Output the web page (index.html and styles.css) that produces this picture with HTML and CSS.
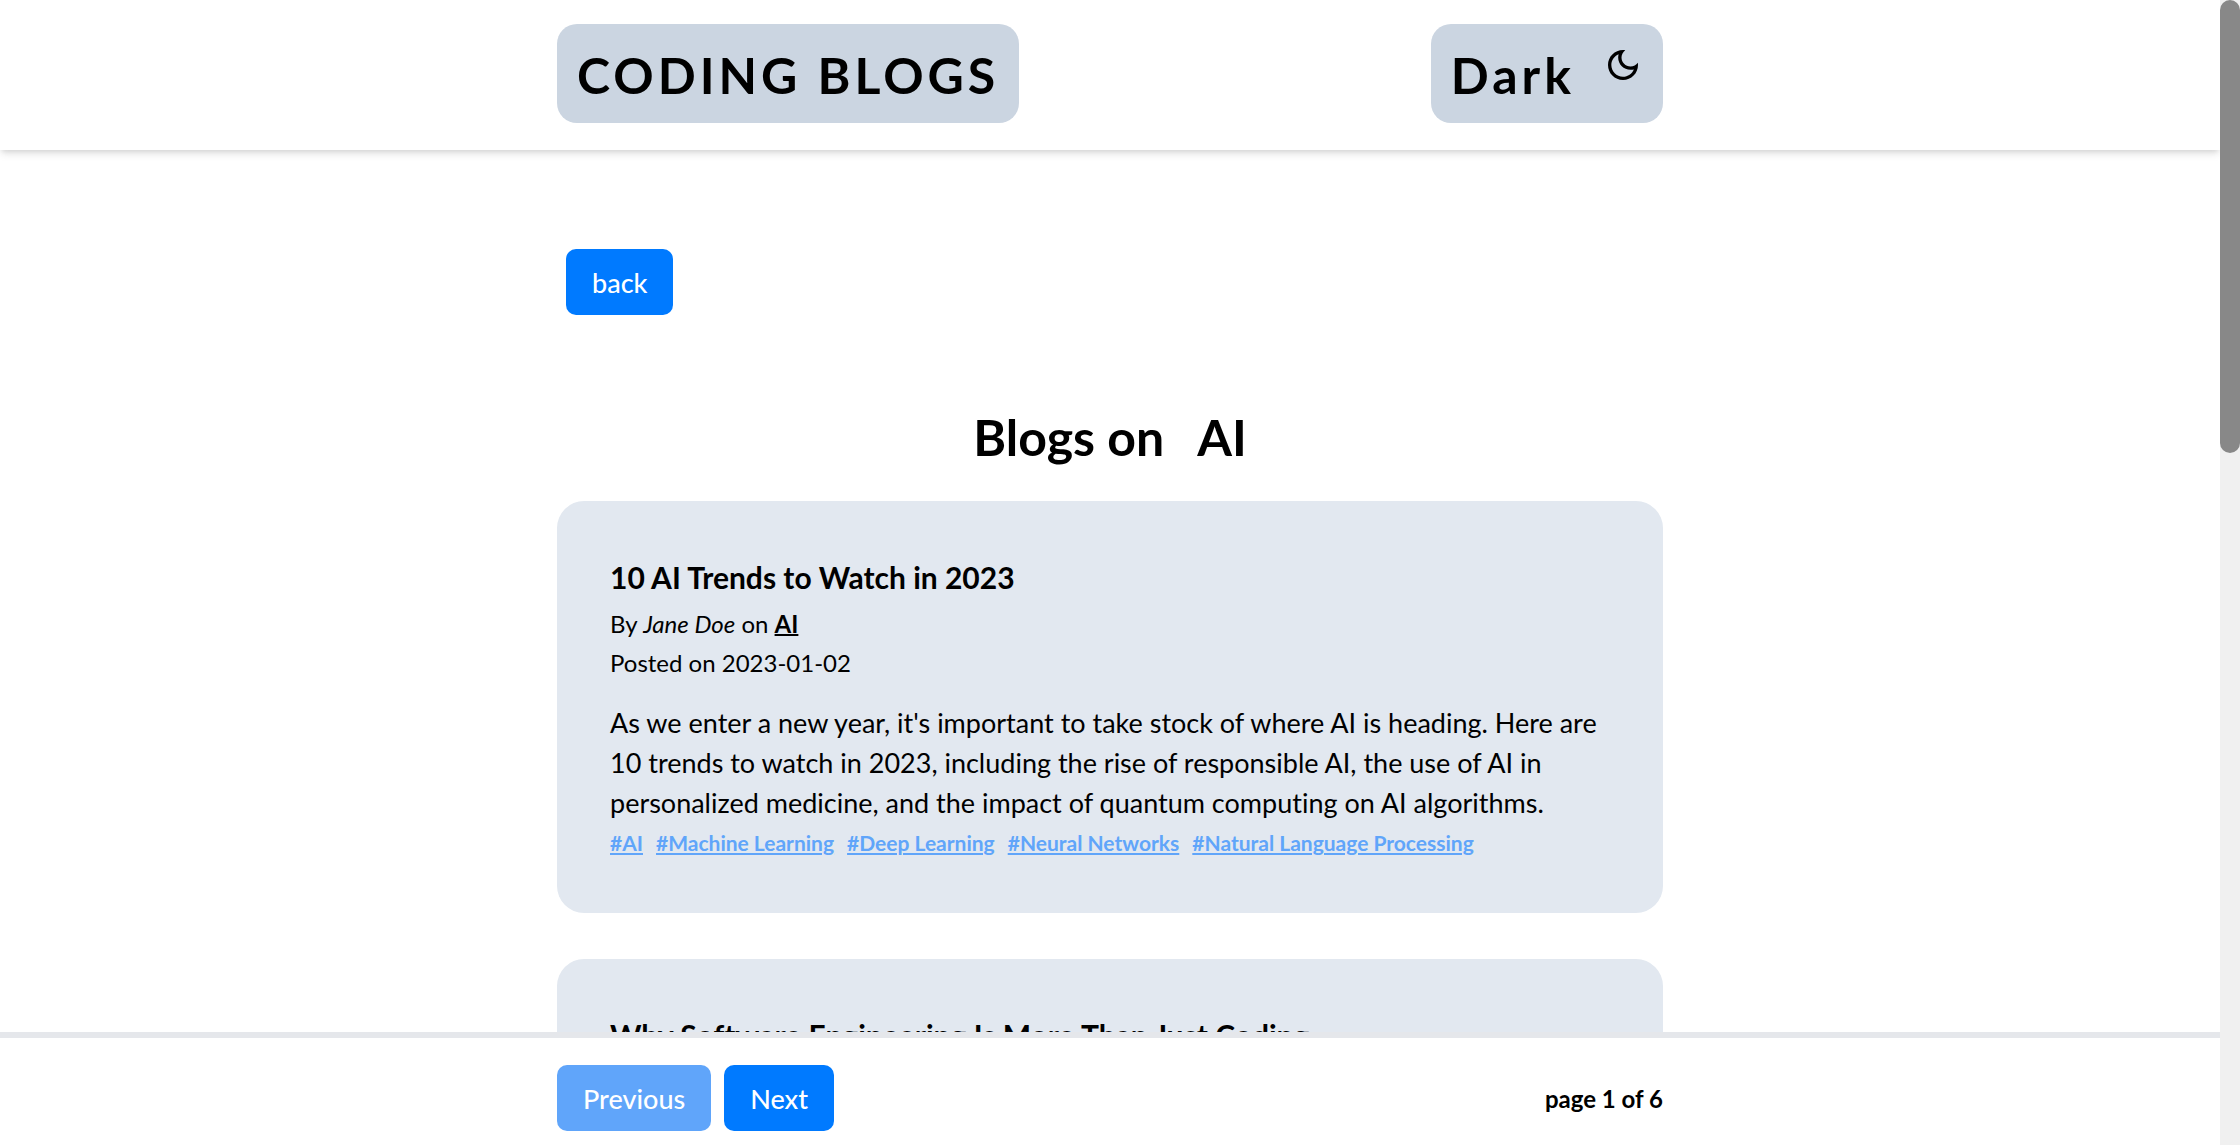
FILE: index.html
```html
<!DOCTYPE html>
<html lang="en">
<head>
<meta charset="utf-8">
<meta name="viewport" content="width=device-width, initial-scale=1">
<title>Coding Blogs</title>
<link rel="stylesheet" href="styles.css">
</head>
<body>
<div class="app">
  <div class="page">
    <header class="site-header">
      <div class="container header-row">
        <a class="chip" href="#">CODING BLOGS</a>
        <button class="chip" type="button">Dark
          <svg class="moon" viewBox="0 0 24 24" aria-hidden="true"><path d="M9.37,5.51C9.19,6.15,9.1,6.82,9.1,7.5c0,4.08,3.32,7.4,7.4,7.4c0.68,0,1.35-0.09,1.99-0.27C17.45,17.19,14.93,19,12,19c-3.86,0-7-3.14-7-7C5,9.07,6.81,6.55,9.37,5.51z M12,3c-4.97,0-9,4.03-9,9s4.03,9,9,9s9-4.03,9-9c0-0.46-0.04-0.92-0.1-1.36c-0.98,1.37-2.58,2.26-4.4,2.26c-2.98,0-5.4-2.42-5.4-5.4c0-1.81,0.89-3.42,2.26-4.4C12.92,3.04,12.46,3,12,3L12,3z"/></svg>
        </button>
      </div>
    </header>

    <main class="content">
      <div class="container">
        <div class="back-row"><button class="btn" type="button">back</button></div>
        <h1 class="page-title"><span>Blogs on</span><span>AI</span></h1>
        <div class="posts">
          <article class="card">
            <h2 class="card-title">10 AI Trends to Watch in 2023</h2>
            <p class="meta">By <em>Jane Doe</em> on <a class="category" href="#">AI</a></p>
            <p class="meta">Posted on 2023-01-02</p>
            <p class="excerpt">As we enter a new year, it's important to take stock of where AI is heading. Here are 10 trends to watch in 2023, including the rise of responsible AI, the use of AI in personalized medicine, and the impact of quantum computing on AI algorithms.</p>
            <div class="tags">
              <a href="#">#AI</a>
              <a href="#">#Machine Learning</a>
              <a href="#">#Deep Learning</a>
              <a href="#">#Neural Networks</a>
              <a href="#">#Natural Language Processing</a>
            </div>
          </article>
          <article class="card">
            <h2 class="card-title">Why Software Engineering Is More Than Just Coding</h2>
          </article>
        </div>
      </div>
    </main>

    <footer class="pager">
      <div class="container pager-row">
        <button class="btn" type="button" disabled>Previous</button>
        <button class="btn" type="button">Next</button>
        <p class="page-count">page 1 of 6</p>
      </div>
    </footer>
  </div>
  <div class="scroll-track" aria-hidden="true"><div class="scroll-thumb"></div></div>
</div>
</body>
</html>
```
FILE: styles.css
```css
* {
  box-sizing: border-box;
}

body {
  margin: 0;
  background: #fff;
  color: #000;
  font-family: Lato, "Open Sans", sans-serif;
  font-variant-ligatures: none;
}

h1, h2, p {
  margin: 0;
}

button {
  font: inherit;
  border: 0;
}

.app {
  display: flex;
  height: 100vh;
}

.page {
  flex: 1;
  min-width: 0;
  display: flex;
  flex-direction: column;
  overflow: hidden;
}

.container {
  width: 100%;
  max-width: 1106px;
  margin: 0 auto;
}

/* Header */
.site-header {
  position: relative;
  z-index: 1;
  padding: 24px 0 27px;
  background: #fff;
  box-shadow: 0 5px 8px -1px rgba(0, 0, 0, 0.1), 0 3px 5px -2px rgba(0, 0, 0, 0.1);
}

.header-row {
  display: flex;
  justify-content: space-between;
}

.chip {
  display: flex;
  align-items: flex-start;
  gap: 28px;
  padding: 21px 20px 18px;
  border-radius: 20px;
  background: #cbd5e1;
  color: #000;
  font-size: 50px;
  font-weight: 700;
  line-height: 60px;
  letter-spacing: 4px;
  text-decoration: none;
}

.moon {
  width: 40px;
  height: 40px;
}

/* Content */
.content {
  flex: 1;
  min-height: 0;
  overflow: hidden;
  padding-top: 99px;
}

.back-row {
  padding-left: 9px;
}

.btn {
  height: 66px;
  padding: 0 26px;
  border-radius: 10px;
  background: #007aff;
  color: #fff;
  font-size: 27px;
  font-weight: 500;
}

.btn:disabled {
  background: #60a5fa;
}

.page-title {
  display: flex;
  justify-content: center;
  gap: 33px;
  margin: 92px 0 34px;
  font-size: 50px;
  line-height: 60px;
}

.posts {
  display: flex;
  flex-direction: column;
  gap: 46px;
}

.card {
  padding: 55px 53px 50px;
  border-radius: 27px;
  background: #e2e8f0;
}

.card-title {
  margin-bottom: 5px;
  font-size: 30px;
  line-height: 43px;
}

.meta {
  font-size: 24px;
  line-height: 39px;
}

.category {
  color: #000;
  font-weight: 700;
  text-decoration: underline 2px;
}

.excerpt {
  margin-top: 21px;
  font-size: 27px;
  line-height: 40px;
}

.tags {
  display: flex;
  flex-wrap: wrap;
  column-gap: 13px;
  font-size: 21px;
  font-weight: 700;
  line-height: 40px;
}

.tags a {
  color: #60a5fa;
}

/* Pagination */
.pager {
  padding: 27px 0 14px;
  border-top: 6px solid #e5e7eb;
  background: #fff;
}

.pager-row {
  display: flex;
  align-items: center;
  gap: 13px;
}

.page-count {
  margin-left: auto;
  font-size: 24px;
  font-weight: 700;
}

/* Scrollbar */
.scroll-track {
  width: 20px;
  background: #f0f0f0;
}

.scroll-thumb {
  height: 39.6%;
  border-radius: 10px;
  background: #888;
}
```
